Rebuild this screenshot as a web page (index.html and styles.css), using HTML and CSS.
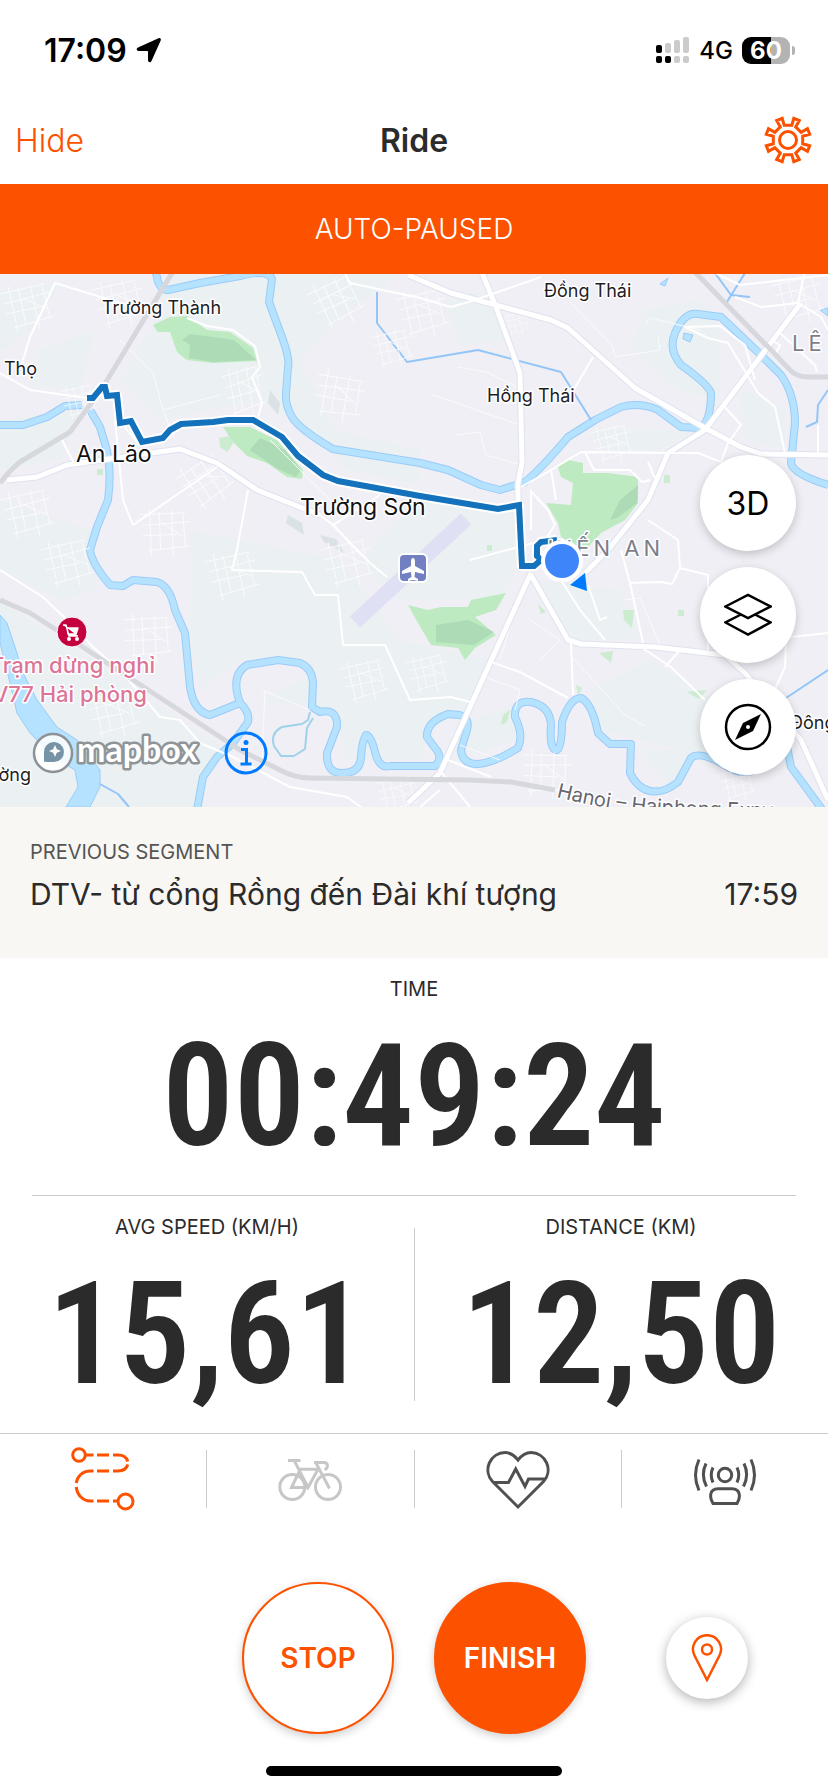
FILE: index.html
```
<!DOCTYPE html>
<html lang="en">
<head>
  <meta charset="UTF-8" />
  <meta name="viewport" content="width=device-width, initial-scale=1" />
  <title>Ride</title>
  <link rel="stylesheet" href="styles.css">
</head>
<body>
  <!-- Status bar -->
  <div class="status">
    <div class="status-group">
      <span class="clock">17:09</span>
      <svg class="location" viewBox="0 0 26 26"><path d="M22.5 1.3 2 10.6c-2 1-1.600 3.400.6 3.400h8.600q.8 0 .8.8v8.400c0 2.300 2.600 2.700 3.500.7L24.700 3.500c.7-1.600-.6-2.900-2.200-2.200z" /></svg>
    </div>
    <div class="status-group">
      <svg class="signal" viewBox="0 0 34 27">
        <g fill="#cbcbcb">
          <rect x="9" y="6" width="6" height="10" rx="2" /><rect x="18" y="3" width="6" height="13" rx="2" /><rect x="27" y="0" width="6" height="16" rx="2" />
          <rect x="18" y="19" width="6" height="7" rx="2" /><rect x="27" y="19" width="6" height="7" rx="2" />
        </g>
        <rect x="0" y="8" width="6" height="8" rx="2" /><rect x="0" y="19" width="6" height="7" rx="2" /><rect x="9" y="19" width="6" height="7" rx="2" />
      </svg>
      <span class="network">4G</span>
      <span class="battery">60</span>
    </div>
  </div>

  <header class="header">
    <button class="hide">Hide</button>
    <h1>Ride</h1>
    <button class="settings" aria-label="Settings">
      <svg viewBox="-25 -25 50 50">
        <path d="M3.800-14.700 5.800-21.700 11.300-19.500 7.700-13.100 13.100-7.700 19.500-11.300 21.700-5.800 14.700-3.800 14.700 3.800 21.700 5.800 19.500 11.300 13.100 7.700 7.700 13.100 11.300 19.500 5.800 21.700 3.800 14.700-3.800 14.700-5.800 21.700-11.300 19.500-7.700 13.100-13.100 7.700-19.500 11.300-21.700 5.800-14.700 3.800-14.700-3.800-21.700-5.800-19.500-11.300-13.100-7.700-7.700-13.100-11.300-19.500-5.800-21.700-3.800-14.700z" />
        <circle r="8.500" />
      </svg>
    </button>
  </header>

  <div class="banner">AUTO-PAUSED</div>

  <!-- Map -->
  <section class="map">
    <svg class="map-canvas" viewBox="0 274 828 533" preserveAspectRatio="xMidYMid slice">
      <defs>
        <path id="streets" d="M0 10 44 0M4 20 50 8M6 30 40 23M14 44 54 32M8 2 18 48M18 4 26 40M30 0 40 46M42 2 50 34M22 14 46 24" />
        <path id="expressway" d="M556 797Q600 808 640 812T800 818" />
      </defs>

      <rect y="274" width="828" height="533" fill="#f0eff5" />
      <g class="fields">
        <path d="M170 274H400L350 310 300 360 335 430 420 450V485L350 470 300 430 262 400 160 420 120 380 150 330z" />
        <path d="M0 290 60 284 30 330 0 350zM40 350 95 330 80 390 30 385zM0 420 80 410 60 460 0 470z" />
        <path d="M0 500 90 530 95 590 60 600 0 570zM0 600 60 640 150 700 220 745 200 807H0zM190 530 340 560 400 640 400 690 330 700 300 660 240 660 200 690 190 640z" />
        <path d="M445 300 490 290 510 340 460 345zM645 310 700 300 720 330 720 400 680 390 630 350zM740 390 785 410 785 450 745 440z" />
        <path d="M420 500 515 510 520 560 500 600 400 600 360 560zM535 580 620 590 640 640 570 640zM400 640 490 660 460 720 410 730zM650 660 700 690 760 730 730 760 640 740 600 730 590 690z" />
        <path d="M590 430 700 430 660 450 600 450zM255 700 400 640 440 700 420 760 345 760 335 710zM470 720 515 705 515 740 470 755zM640 750 690 750 670 785z" />
      </g>

      <path class="runway" d="M355 622 466 519" />

      <!-- Hills and parks -->
      <g class="park">
        <path d="m153 325 17-8 17-1 20 14 23 2 23 16 4 13-44 2-26-3-10-8-7-20-12 0z" />
        <path d="m223 427h27l27 13 26 30-1 9-15-2-20-14-20-7-14-14z" />
        <path d="m558 467 10-7 15 3v10h25l30 4v26l-13 17-24 13-16 17-24-13-3-14-12-20 25 2 2-22-12-6z" />
        <path d="m408 605 20 5 13-3h27l3-7 35-7-10 17-21 7 21 18-21 13-10 12-7-12-27-3-13-22z" />
        <path d="m219 438 12-2 2 8-6 8-7-5zM97 469h6v6h-6zM623 610h11l-2 18-8-8zM599 653l14-2-2 12zM538 604l8 8-5 2zM503 715l7-5-3 12-6 3zM687 692l20-2-8 9zM664 475h6v8h-6zM678 610h6v6h-6zM576 685l6 3-4 8zM487 545h5v6h-5z" opacity=".7" />
      </g>
      <g class="shade">
        <path d="m190 345 8-10 36 5 22 20-43 2-24-4zM250 450l10-12 25 12 16 20-5 7-20-9zM610 520l10-20 18-15-1 18-20 15zM436 625l32-5 26 12-20 13-38-3zM190 334l16 3 2 8-14 2-12-7z" />
      </g>
      <g class="slope">
        <path d="m270 390 10 13-2 12-10-12zM288 515l14 8 2 12-18-12zM320 535l16 4 8 14-20-11z" />
      </g>

      <!-- Water -->
      <g class="river-edge">
        <path d="M155 268 158 282Q162 291 168 290L200 283 240 276Q268 269 272 279L269 302 283 340Q290 360 288 367L286 393Q285 405 292 417T333 449L420 463 448 470 481 485 500 490 525 482Q540 470 568 437L595 420 621 407Q640 402 658 410L681 427 701 428Q711 420 711 393 708 384 681 365 668 350 675 333 684 312 698 314L721 317 761 355 781 375Q795 395 795 423L791 463Q793 474 828 485" />
        <path d="M0 425H23L47 417 65 406 82 405M90 410 100 427 106 447Q112 470 108 500L97 527 90 550Q92 564 110 585L123 586 133 580 157 582Q170 586 175 610L185 633 190 687Q194 712 210 715L240 703Q250 712 248 722L233 743 217 757 203 777 197 810" />
        <path d="M240 703Q230 675 247 665L278 660 300 663Q312 668 313 683L312 707 320 712Q338 708 337 727L327 753Q326 774 343 773 360 773 361 757T366 735Q371 735 375 752T390 766H435Q442 760 438 752L427 737Q426 722 448 714L460 715Q470 718 467 730L461 750Q462 764 478 764 496 762 518 748 524 735 515 717 514 700 531 702 550 706 551 725 549 750 557 750 562 748 562 722 570 698 581 698 592 703 598 733L610 744H631L630 773Q637 788 650 791T678 782L691 758Q700 750 728 767T786 742L791 767 824 812" />
      </g>
      <g class="river">
        <path d="M155 268 158 282Q162 291 168 290L200 283 240 276Q268 269 272 279L269 302 283 340Q290 360 288 367L286 393Q285 405 292 417T333 449L420 463 448 470 481 485 500 490 525 482Q540 470 568 437L595 420 621 407Q640 402 658 410L681 427 701 428Q711 420 711 393 708 384 681 365 668 350 675 333 684 312 698 314L721 317 761 355 781 375Q795 395 795 423L791 463Q793 474 828 485" />
        <path d="M0 425H23L47 417 65 406 82 405M90 410 100 427 106 447Q112 470 108 500L97 527 90 550Q92 564 110 585L123 586 133 580 157 582Q170 586 175 610L185 633 190 687Q194 712 210 715L240 703Q250 712 248 722L233 743 217 757 203 777 197 810" />
        <path d="M240 703Q230 675 247 665L278 660 300 663Q312 668 313 683L312 707 320 712Q338 708 337 727L327 753Q326 774 343 773 360 773 361 757T366 735Q371 735 375 752T390 766H435Q442 760 438 752L427 737Q426 722 448 714L460 715Q470 718 467 730L461 750Q462 764 478 764 496 762 518 748 524 735 515 717 514 700 531 702 550 706 551 725 549 750 557 750 562 748 562 722 570 698 581 698 592 703 598 733L610 744H631L630 773Q637 788 650 791T678 782L691 758Q700 750 728 767T786 742L791 767 824 812" />
      </g>
      <path class="lake" d="m0 615 7 8 8 24 8 26 14 27 20 27 20 13 13 17 10 13v17l-10 20H66l12-20-3-17-22-13-23-24-13-20-7-30-10-40z" />
      <path class="lake" d="m684 333 9 2-3 7-7-3zM660 284l8-6-3 8zM820 310l8-2v8z" />
      <path class="canal" d="M377 292V323L407 362 478 350 561 372 591 420M745 273 725 305M715 273 731 295 750 297M828 390 818 405 817 422 806 427M100 784 118 794 129 807M786 698 828 670" />
      <path class="pond" d="M310 712 308 720 302 724 282 727Q270 733 274 746L281 756 294 756 305 749 307 728 313 718" />

      <!-- Minor streets -->
      <g class="streets">
        <use href="#streets" transform="translate(92 280)" /><use href="#streets" transform="translate(0 284)" />
        <use href="#streets" transform="translate(305 285) rotate(-12)" /><use href="#streets" transform="translate(395 290)" />
        <use href="#streets" transform="translate(322 365) rotate(22)" /><use href="#streets" transform="translate(222 366) scale(.8 1.100)" />
        <use href="#streets" transform="translate(172 470) rotate(-20)" /><use href="#streets" transform="translate(142 505) rotate(10)" />
        <use href="#streets" transform="translate(0 490)" /><use href="#streets" transform="translate(40 540)" />
        <use href="#streets" transform="translate(205 552)" /><use href="#streets" transform="translate(320 540)" />
        <use href="#streets" transform="translate(125 610) rotate(10)" /><use href="#streets" transform="translate(85 690)" />
        <use href="#streets" transform="translate(340 660) scale(.9)" /><use href="#streets" transform="translate(406 655) scale(.8)" />
        <use href="#streets" transform="translate(525 745) rotate(14)" /><use href="#streets" transform="translate(718 768) scale(.7)" />
        <use href="#streets" transform="translate(375 776) scale(.8)" /><use href="#streets" transform="translate(60 385) scale(.7)" />
        <use href="#streets" transform="translate(503 312) scale(.5)" /><use href="#streets" transform="translate(370 330) scale(.8)" />
        <use href="#streets" transform="translate(770 276)" /><use href="#streets" transform="translate(590 425) scale(.8)" />
        <path d="M153 373 163 410 220 395M163 410 175 440M270 440 330 500M153 373 120 340M458 367 486 372 520 388M433 395 520 425M455 435 480 432 486 455 522 465M570 302 612 345 615 357 660 350 658 335M645 325 650 318 700 330M515 610 500 660M530 620 560 640 540 660M480 675 520 690 515 710M460 745 500 760M570 655 625 715 645 726M625 600 640 598 660 645M262 690 310 710M265 690 262 760" />
      </g>

      <!-- Roads -->
      <g class="road-case">
        <path d="M408 275 451 293 551 320 568 328 635 388 705 428 741 447 761 454 828 455M481 270 496 307 520 373 522 463 518 483 518 503M531 573 440 773 408 803M801 303 705 430 668 453 648 500 608 550 585 573" />
        <path d="M531 575 568 640 581 644 655 647 725 655 745 673 801 740 828 800M7 480 37 477 67 465 180 449 217 463 257 490 320 515" />
      </g>
      <g class="road">
        <path d="M408 275 451 293 551 320 568 328 635 388 705 428 741 447 761 454 828 455M481 270 496 307 520 373 522 463 518 483 518 503M531 573 440 773 408 803M801 303 705 430 668 453 648 500 608 550 585 573" />
        <path d="M531 575 568 640 581 644 655 647 725 655 745 673 801 740 828 800M7 480 37 477 67 465 180 449 217 463 257 490 320 515" />
      </g>
      <g class="lane">
        <path d="M115 420 123 500 133 525 217 467M248 490 237 550 232 570 302 572 315 595 338 595 343 645 385 645 410 700 451 697 470 702M320 515 333 525 355 548 370 563 387 577M333 525 380 495M153 313 55 283 30 337 22 363M0 373 30 390 87 398M187 318 207 326 233 330 255 346 260 367 252 377 262 403 258 417M343 270 350 283 420 298 451 307 475 300 541 277M62 440 75 465M123 425 140 445" />
        <path d="M0 570 43 597 67 620 93 647 123 673 160 717 180 720 200 743 233 757 290 787 347 797 365 810M491 662 520 672 568 698M571 643 573 695M448 760 491 777M641 647 671 667 705 700M621 550 630 583 643 643M630 583 661 582 672 584 680 568 678 540 648 520M680 568 708 575 708 650M521 487 551 470 581 452 668 453 698 453 721 462 728 443 741 425 723 405M593 357 570 396M585 452 594 470 630 470 642 482 650 480M648 462 655 478M561 580 580 610 605 640M588 585 600 620 607 617M530 490 548 510 555 525 545 540 470 560M551 470 556 500M531 490 531 530" />
        <path d="M685 327 720 326 745 345 755 380M685 327 708 338 728 343 758 393 775 407 785 453M735 297 761 307 798 303 821 317 828 330M715 273 740 285 828 275M798 303 805 270M771 340 780 345 775 355M780 333 815 365 817 372M791 637 828 633M786 640 785 667 761 720M818 425 818 455M680 650 665 667M442 773 470 807M420 807 440 790" />
      </g>
      <path class="highway" d="M175 268 103 387 70 432 20 462Q10 470 0 483M0 600 30 613 72 640 133 680 240 750 280 770Q295 778 310 778L470 780 511 782 555 790M691 268 771 350 790 370Q797 377 808 377H828" />

      <!-- Recorded track -->
      <path class="track-case" d="M87 398H93L102 387 105 387 107 396 117 395 120 423 131 421 142 442 163 438 170 430 181 424 213 422 228 420H253L282 437 298 456 323 475 338 481 420 496 498 509 519 505 522 566H534L541 560 537 556V546L541 542 557 540" />
      <path class="track" d="M87 398H93L102 387 105 387 107 396 117 395 120 423 131 421 142 442 163 438 170 430 181 424 213 422 228 420H253L282 437 298 456 323 475 338 481 420 496 498 509 519 505 522 566H534L541 560 537 556V546L541 542 557 540" />

      <!-- Labels -->
      <g class="place">
        <text x="102" y="314">Trường Thành</text>
        <text x="37" y="375" text-anchor="end">Trường Thọ</text>
        <text x="544" y="297">Đồng Thái</text>
        <text x="487" y="402">Hồng Thái</text>
        <text x="31" y="781" text-anchor="end">Tường</text>
        <text x="790" y="729">Đông</text>
      </g>
      <g class="town">
        <text x="76" y="462">An Lão</text>
        <text x="300" y="515">Trường Sơn</text>
      </g>
      <g class="district">
        <text x="792" y="351">LÊ</text>
        <text x="664" y="556" text-anchor="end">KIẾN AN</text>
      </g>
      <g class="poi">
        <text x="155" y="673" text-anchor="end">Trạm dừng nghỉ</text>
        <text x="147" y="702" text-anchor="end">V77 Hải phòng</text>
      </g>
      <text class="road-name"><textPath href="#expressway">Hanoi – Haiphong Expy</textPath></text>

      <circle cx="72" cy="632" r="15" fill="#c4003e" stroke="#fff" stroke-width="1" />
      <path d="M63 625h3l3 11h9M67 628h11l-2 6h-8z" fill="#fff" stroke="#fff" stroke-width="1.500" stroke-linejoin="round" />
      <circle cx="69" cy="639" r="2" fill="#fff" /><circle cx="77" cy="639" r="2" fill="#fff" />

      <rect x="399" y="554" width="28" height="28" rx="5" fill="#7280c2" stroke="#fff" stroke-width="2" />
      <path d="M413 558q2 0 2 4v4l9 5v3l-9-2-.5 5 3.500 2v2l-5-1-5 1v-2l3.500-2-.5-5-9 2v-3l9-5v-4q0-4 2-4z" fill="#fff" />

      <path d="M570 585 585 573 587 591z" fill="#007aff" />
      <circle cx="562" cy="561" r="21" fill="#fff" />
      <circle cx="562" cy="561" r="17" fill="#3f85fa" />
    </svg>

    <div class="attribution">
      <svg class="mapbox" viewBox="0 0 174 44" role="img" aria-label="mapbox">
        <circle cx="21" cy="22" r="19" fill="#fff" fill-opacity=".85" stroke="#8c9296" stroke-width="2.500" />
        <path d="M12 30.500V22a10 10 0 1 1 10 9c-4 0-7 .3-10-.5z" fill="#7794a7" />
        <path d="m23 14 1.800 4.200L29 20l-4.200 1.800L23 26l-1.800-4.200L17 20l4.200-1.800z" fill="#fff" />
        <text x="45" y="31">mapbox</text>
      </svg>
      <button class="info" aria-label="Map information">
        <svg viewBox="0 0 44 44"><circle cx="22" cy="22" r="20" /><path d="M17 18.500h5.500V33M16.500 33h11" /><circle class="tittle" cx="22" cy="11.500" r="2.500" /></svg>
      </button>
    </div>

    <div class="map-controls">
      <button class="round">3D</button>
      <button class="round" aria-label="Map layers">
        <svg viewBox="0 0 48 48"><path d="M1.500 15.500 24 4 46.500 15.500 24 27zM17 23.500 1.500 31.500 24 43.500 46.500 31.500 31 23.500" /></svg>
      </button>
      <button class="round" aria-label="Compass">
        <svg viewBox="0 0 48 48"><circle cx="24" cy="24" r="22" /><path class="needle" d="M37 11 29 28 11 37 19 20z" /><circle class="pivot" cx="24" cy="24" r="2" /></svg>
      </button>
    </div>
  </section>

  <section class="segment">
    <h2>PREVIOUS SEGMENT</h2>
    <div class="segment-row">
      <span>DTV- từ cổng Rồng đến Đài khí tượng</span>
      <span>17:59</span>
    </div>
  </section>

  <!-- Ride stats -->
  <section class="stats">
    <div class="stat">
      <div class="label">TIME</div>
      <div class="value">00:49:24</div>
    </div>
    <div class="stat-pair">
      <div class="stat">
        <div class="label">AVG SPEED (KM/H)</div>
        <div class="value">15,61</div>
      </div>
      <div class="stat">
        <div class="label">DISTANCE (KM)</div>
        <div class="value">12,50</div>
      </div>
    </div>
  </section>

  <nav class="tabs">
    <button class="tab active" aria-label="Route">
      <svg viewBox="0 0 64 64"><circle cx="8" cy="8" r="6.300" /><circle cx="54.500" cy="54.500" r="7.500" /><path d="M14 8h8.500M26 8h12M42 8h5c5 0 8.500 2 9.800 6.500M56.800 17.500C55.500 22 52 24 47 24h-5M38 24H26M22.500 24h-3C11 24 6 30 5.300 36M5.300 40C6 48 12 54 19.500 54h3M26 54h12M42 54h5" /></svg>
    </button>
    <button class="tab disabled" aria-label="Bike">
      <svg viewBox="0 0 64 64"><circle cx="14.300" cy="40" r="12.500" /><circle cx="50" cy="40" r="12.500" /><path d="M10 13.500h12.500M16.500 14 30 40.500 40 22.300H21.500M22 23 13.500 40.500H30M36 15.500H46c4.500 0 4.500 6 .5 7M38 16 51.500 41.500" /></svg>
    </button>
    <button class="tab" aria-label="Heart rate">
      <svg viewBox="0 0 64 64"><path d="M32 13C28 8 24 5.500 19 5.500A17.300 17.300 0 0 0 6.500 34.500L32 60 57.500 34.500A17.300 17.300 0 0 0 45 5.500C40 5.500 36 8 32 13zM8 35.500H22.500L29.700 22 39 39.500 42.500 32H59" /></svg>
    </button>
    <button class="tab" aria-label="Beacon">
      <svg viewBox="0 0 64 64"><circle cx="32" cy="28" r="6.700" /><path d="M20 56.500C16.500 51 16 41.800 25 41.800H39C48 41.800 47.500 51 44 56.500zM20 20.500Q16.500 28 20 35.500M13 16.500Q7.500 28 13.500 39.500M6 12.500Q-1 28 6 43.500M44 20.500Q47.500 28 44 35.500M51 16.500Q56.500 28 50.500 39.500M58 12.500Q65 28 58 43.500" /></svg>
    </button>
  </nav>

  <div class="actions">
    <div class="main-actions">
      <button class="stop">STOP</button>
      <button class="finish">FINISH</button>
    </div>
    <button class="pin" aria-label="Drop a pin">
      <svg viewBox="0 0 32 48"><path d="M16 46 3.500 21.500A14 14 0 1 1 28.500 21.500z" /><circle cx="16" cy="15.500" r="5" /></svg>
    </button>
  </div>

  <div class="home-indicator"></div>
</body>
</html>
```
FILE: styles.css
```
* {
  margin: 0;
  padding: 0;
  box-sizing: border-box;
}

body {
  background: #fff;
  font-family: Inter, "Open Sans", sans-serif;
  color: #2b2b2b;
}

button {
  border: none;
  background: none;
  font-family: inherit;
  cursor: pointer;
}

svg {
  display: block;
}

/* status bar */
.status {
  display: flex;
  justify-content: space-between;
  align-items: center;
  height: 100px;
  padding: 0 33px 0 44px;
  color: #000;
}

.status-group {
  display: flex;
  align-items: center;
  gap: 9px;
}

.clock {
  font-size: 32px;
  font-weight: 600;
}

.location {
  width: 26px;
  height: 26px;
}

.signal {
  width: 34px;
  height: 27px;
}

.network {
  font-size: 24px;
  font-weight: 500;
}

.battery {
  position: relative;
  width: 48px;
  height: 27px;
  margin-right: 5px;
  border-radius: 9px;
  background: linear-gradient(90deg, #000 60%, #b3b3b3 60%);
  color: #fff;
  font-size: 24px;
  font-weight: 700;
  line-height: 27px;
  text-align: center;
}

.battery::after {
  content: "";
  position: absolute;
  right: -5px;
  top: 9px;
  width: 3px;
  height: 9px;
  border-radius: 0 4px 4px 0;
  background: #b3b3b3;
}

/* header */
.header {
  display: grid;
  grid-template-columns: 1fr auto 1fr;
  align-items: center;
  height: 84px;
  padding: 0 15px 4px;
}

.header h1 {
  font-size: 32px;
  font-weight: 600;
}

.hide {
  justify-self: start;
  color: #fc5200;
  font-size: 32px;
  font-weight: 300;
}

.settings {
  justify-self: end;
}

.settings svg {
  width: 50px;
  height: 50px;
  fill: none;
  stroke: #fc5200;
  stroke-width: 3;
}

.banner {
  background: #fc5200;
  color: #fff;
  font-size: 28px;
  font-weight: 300;
  line-height: 90px;
  text-align: center;
}

/* map */
.map {
  position: relative;
  overflow: hidden;
}

.map-canvas {
  width: 100%;
  height: 533px;
  fill: none;
  stroke-linejoin: round;
}

.fields {
  fill: #ebf0f2;
}

.runway {
  stroke: #dfe0f4;
  stroke-width: 15;
}

.park {
  fill: #bdeac0;
}

.shade {
  fill: #a5d4b0;
  opacity: 0.7;
}

.slope {
  fill: #dbe2e6;
}

.river-edge {
  stroke: #9acbf8;
  stroke-width: 8;
}

.river {
  stroke: #b5e3ff;
  stroke-width: 6;
}

.lake {
  fill: #b5e3ff;
  stroke: #9acbf8;
  stroke-width: 1;
}

.canal {
  stroke: #93c6f7;
  stroke-width: 2;
}

.pond {
  stroke: #9dd2e8;
  stroke-width: 2;
}

.streets {
  stroke: #fafbfd;
  stroke-width: 1;
}

.road-case {
  stroke: #dfe3ee;
  stroke-width: 7;
}

.road {
  stroke: #fff;
  stroke-width: 5;
}

.lane {
  stroke: #fff;
  stroke-width: 2;
}

.highway {
  stroke: #d7d8dd;
  stroke-width: 5;
}

.track-case {
  stroke: #fff;
  stroke-width: 10;
}

.track {
  stroke: #1372bb;
  stroke-width: 6;
  stroke-linejoin: miter;
}

.map-canvas text {
  stroke: #fff;
  stroke-width: 3;
  paint-order: stroke;
}

.place {
  fill: #1d1d1f;
  font-size: 18px;
}

.town {
  fill: #111;
  font-size: 23px;
}

.district {
  fill: #7e7e8a;
  font-size: 22px;
  letter-spacing: 4px;
}

.poi {
  fill: #dd7597;
  font-size: 22px;
  font-weight: 500;
}

.road-name {
  fill: #66666e;
  font-size: 20px;
}

.attribution {
  position: absolute;
  left: 32px;
  bottom: 32px;
  display: flex;
  gap: 18px;
}

.mapbox {
  width: 174px;
  height: 44px;
}

.mapbox text {
  fill: #fff;
  stroke: #8f9498;
  stroke-width: 5;
  stroke-linejoin: round;
  paint-order: stroke;
  font-family: Lato, sans-serif;
  font-size: 34px;
  font-weight: 700;
}

.info svg {
  width: 44px;
  height: 44px;
  fill: none;
  stroke: #007aff;
  stroke-width: 3;
}

.info .tittle {
  fill: #007aff;
  stroke: none;
}

.map-controls {
  position: absolute;
  right: 32px;
  bottom: 32px;
  display: flex;
  flex-direction: column;
  gap: 16px;
}

.round {
  display: flex;
  align-items: center;
  justify-content: center;
  width: 96px;
  height: 96px;
  border-radius: 50%;
  background: #fff;
  box-shadow: 0 3px 10px rgba(0, 0, 0, 0.2);
  color: #000;
  font-size: 32px;
}

.round svg {
  width: 48px;
  height: 48px;
  fill: none;
  stroke: #000;
  stroke-width: 2.5;
}

.round .needle {
  fill: #000;
  stroke: none;
}

.round .pivot {
  fill: #fff;
  stroke: none;
}

/* segment */
.segment {
  height: 151px;
  padding: 31px 30px;
  background: #f8f7f3;
}

.segment h2 {
  color: #555;
  font-size: 20px;
  font-weight: 400;
  line-height: 28px;
}

.segment-row {
  display: flex;
  justify-content: space-between;
  margin-top: 8px;
  font-size: 30px;
  line-height: 40px;
}

/* stats */
.stat {
  flex: 1;
  padding: 19px 0 38px;
  text-align: center;
}

.stats > .stat {
  margin: 0 32px;
  border-bottom: 1px solid #ccc;
}

.stat-pair {
  position: relative;
  display: flex;
}

.stat-pair::before {
  content: "";
  position: absolute;
  left: 50%;
  top: 32px;
  bottom: 32px;
  width: 1px;
  background: #ccc;
}

.label {
  font-size: 20px;
  line-height: 24px;
}

.value {
  margin-top: 36px;
  font-family: "Roboto Condensed", "Liberation Sans Narrow", Roboto, sans-serif;
  font-size: 142px;
  font-weight: 600;
  line-height: 120px;
}

/* tabs */
.tabs {
  display: flex;
  padding: 16px 0;
  border-top: 1px solid #ccc;
}

.tab {
  flex: 1;
  display: flex;
  align-items: center;
  justify-content: center;
  height: 58px;
  color: #505050;
}

.tab + .tab {
  border-left: 1px solid #ccc;
}

.tab svg {
  width: 64px;
  height: 64px;
  fill: none;
  stroke: currentColor;
  stroke-width: 3;
}

.tab.active {
  color: #fc5200;
}

.tab.disabled {
  color: #c7c7c7;
}

/* actions */
.actions {
  display: grid;
  grid-template-columns: 1fr auto 1fr;
  align-items: center;
  padding: 58px 0 32px;
}

.main-actions {
  grid-column: 2;
  display: flex;
  gap: 40px;
}

.stop,
.finish {
  width: 152px;
  height: 152px;
  border: 2px solid #fc5200;
  border-radius: 50%;
  box-shadow: 0 3px 10px rgba(0, 0, 0, 0.2);
  font-size: 28px;
  font-weight: 600;
}

.stop {
  background: #fff;
  color: #fc5200;
}

.finish {
  background: #fc5200;
  color: #fff;
}

.pin {
  justify-self: center;
  display: flex;
  align-items: center;
  justify-content: center;
  width: 82px;
  height: 82px;
  border-radius: 50%;
  background: #fff;
  box-shadow: 0 3px 12px rgba(0, 0, 0, 0.3);
}

.pin svg {
  width: 32px;
  height: 48px;
  fill: none;
  stroke: #fc5200;
  stroke-width: 2.5;
}

.home-indicator {
  width: 296px;
  height: 10px;
  margin: 0 auto 16px;
  border-radius: 5px;
  background: #000;
}
```
